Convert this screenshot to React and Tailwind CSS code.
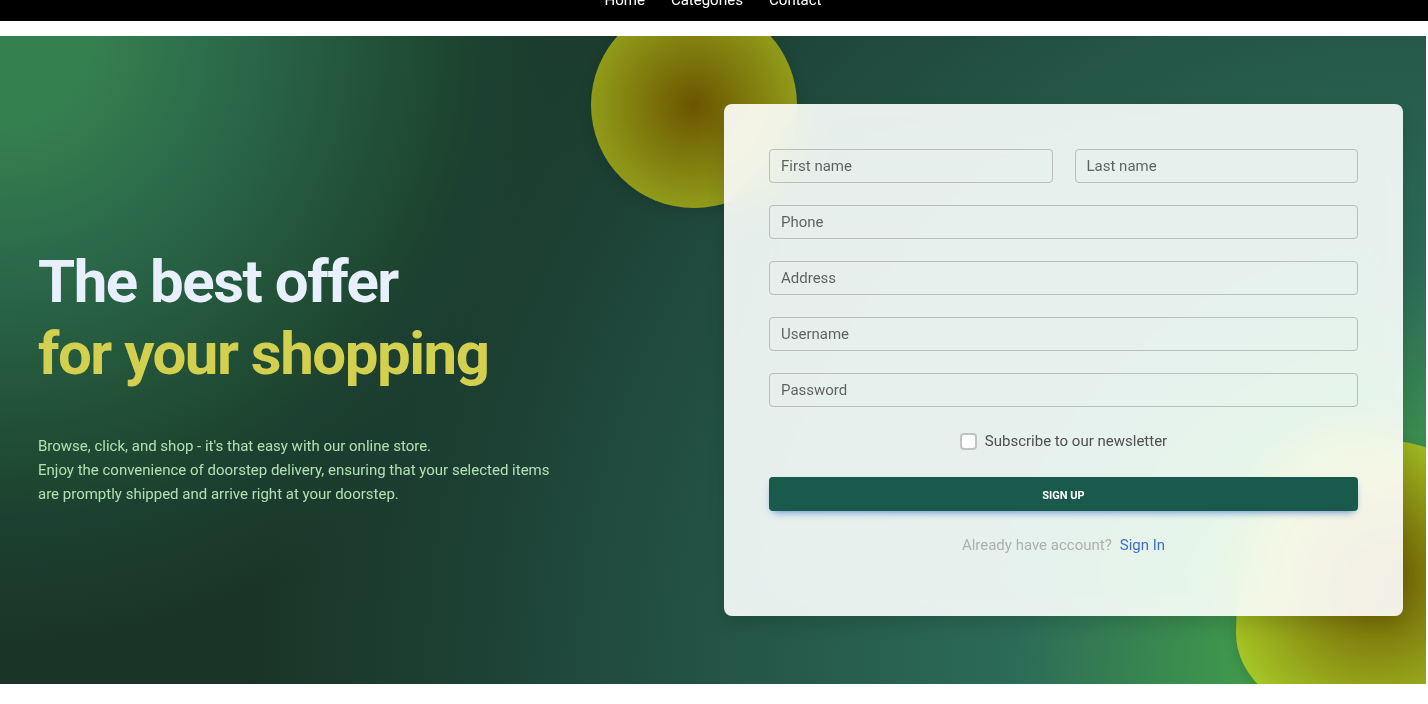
import React from "react";

const links = ["Home", "Categories", "Contact"];

function Field({ id, label, type = "text" }) {
  return (
    <div className="min-w-0">
      <label htmlFor={id} className="sr-only">
        {label}
      </label>
      <input
        id={id}
        type={type}
        placeholder={label}
        className="block h-[34px] w-full rounded-[4px] border border-[#bdbdbd] bg-transparent px-[11px] text-[15px] leading-6 text-[#4f4f4f] outline-none placeholder:text-black/60 focus:border-[#3b71ca]"
      />
    </div>
  );
}

export default function App() {
  return (
    <div className="bg-white pr-[2px] font-['Roboto',sans-serif] text-[15px] leading-6">
      <header className="-mr-[2px] flex h-[21px] flex-col justify-end overflow-hidden bg-black pr-[2px] pb-[9px]">
        <nav className="flex shrink-0 justify-center gap-[26px]">
          {links.map((name) => (
            <a key={name} href="#" className="text-white">
              {name}
            </a>
          ))}
        </nav>
      </header>

      <section className="relative mt-[15px] overflow-hidden bg-[#1a3528] bg-[radial-gradient(609px_circle_at_0%_0%,#35804f_15%,#2c6c4b_35%,#1d452f_75%,#1c4031_80%,transparent_100%),radial-gradient(1172px_circle_at_100%_100%,#419b4b_15%,#2c6b58_35%,#1f473b_75%,#1d4235_80%,transparent_100%)] py-[68px] pr-[23px] pl-[38px]">
        <div className="grid grid-cols-1 items-center gap-[7px] lg:grid-cols-2">
          <div className="relative z-10">
            <h1 className="mt-[46px] mb-[44px] text-[60px] leading-[72px] font-bold tracking-tight text-[#e8effd]">
              The best offer
              <br />
              <span className="text-[#d4d04f]">for your shopping</span>
            </h1>
            <p className="mb-[14px] text-[#b2e0b2]">
              Browse, click, and shop - it's that easy with our online store.
              <br />
              Enjoy the convenience of doorstep delivery, ensuring that your selected items
              <br />
              are promptly shipped and arrive right at your doorstep.
            </p>
          </div>

          <div className="relative">
            <div className="absolute -top-[102px] -left-[133px] size-[206px] rounded-full bg-[radial-gradient(#6b5500,#a0b824)] shadow-[0_4px_14px_rgba(0,0,0,0.15)]" />
            <div className="absolute -right-[114px] -bottom-[101px] size-[281px] rounded-[38%_62%_63%_37%/70%_33%_67%_30%] bg-[radial-gradient(#6b5500,#b4e22e)] shadow-[0_4px_14px_rgba(0,0,0,0.15)]" />

            <div className="relative rounded-[8px] bg-white/90 shadow-[0_8px_18px_rgba(0,0,0,0.13)] backdrop-blur-[23px] backdrop-saturate-200">
              <form className="px-[45px] pt-[45px] pb-[59px]" onSubmit={(e) => e.preventDefault()}>
                <div className="flex flex-col gap-[22px]">
                  <div className="grid grid-cols-2 gap-[22px]">
                    <Field id="first-name" label="First name" />
                    <Field id="last-name" label="Last name" />
                  </div>
                  <Field id="phone" label="Phone" type="tel" />
                  <Field id="address" label="Address" />
                  <Field id="username" label="Username" />
                  <Field id="password" label="Password" type="password" />
                </div>

                <div className="mt-[22px] mb-6 flex items-center justify-center gap-2">
                  <input
                    id="newsletter"
                    type="checkbox"
                    className="size-[17px] appearance-none rounded-[4px] border-2 border-[#c2c2c2] bg-white checked:border-[#3b71ca] checked:bg-[#3b71ca]"
                  />
                  <label htmlFor="newsletter" className="text-[#4f4f4f]">
                    Subscribe to our newsletter
                  </label>
                </div>

                <button
                  type="submit"
                  className="block h-[34px] w-full rounded-[4px] bg-[#1a5a4c] pt-[3px] text-[11px] leading-4 font-bold text-white uppercase shadow-[0_4px_9px_-4px_#3b71ca]"
                >
                  Sign up
                </button>

                <p className="mt-[22px] flex justify-center gap-2 text-[#adb0ae]">
                  Already have account?
                  <a href="#" className="text-[#3b71ca]">
                    Sign In
                  </a>
                </p>
              </form>
            </div>
          </div>
        </div>
      </section>
      <div className="h-5" />
    </div>
  );
}
